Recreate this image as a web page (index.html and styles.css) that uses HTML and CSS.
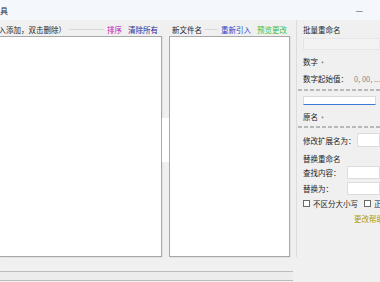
FILE: index.html
```html
<!DOCTYPE html>
<html lang="zh-CN">
  <head>
    <meta charset="UTF-8" />
    <title>重命名工具</title>
    <link rel="stylesheet" href="styles.css">
  </head>
  <body>
    <div class="titlebar">
      <span class="title">具</span>
      <span class="min-btn">—</span>
    </div>
    <div class="main">
      <div class="col-left">
        <div class="head">
          <span class="head-text cut">拖入添加，双击删除）</span>
          <span class="head-line"></span>
          <span class="link purple">排序</span>
          <span class="link navy">清除所有</span>
        </div>
        <div class="list"></div>
      </div>
      <div class="splitter">
        <div class="split-top"></div>
        <div class="split-mid"></div>
        <div class="split-bot"></div>
      </div>
      <div class="col-mid">
        <div class="head">
          <span class="head-text">新文件名</span>
          <span class="head-line"></span>
          <span class="link blue">重新引入</span>
          <span class="link green">预览更改</span>
        </div>
        <div class="list"></div>
      </div>
      <div class="col-right">
        <div class="rp-title">批量重命名</div>
        <div class="blank-input"></div>
        <div class="row">数字 <span class="plus">+</span></div>
        <div class="row row-start">
          <span class="label">数字起始值：</span>
          <span class="hint">0, 00, ...</span>
        </div>
        <div class="dash"></div>
        <div class="name-input"></div>
        <div class="row row-orig">原名 <span class="plus">+</span></div>
        <div class="dash dash-2"></div>
        <div class="row row-ext">
          <span class="label">修改扩展名为：</span>
          <span class="field"></span>
        </div>
        <div class="row row-group">替换重命名</div>
        <div class="row row-find">
          <span class="label">查找内容：</span>
          <span class="field"></span>
        </div>
        <div class="row row-repl">
          <span class="label">替换为：</span>
          <span class="field"></span>
        </div>
        <div class="row row-check">
          <span class="box"></span><span class="check-text">不区分大小写</span>
          <span class="box"></span><span class="check-text">正则</span>
        </div>
        <div class="row row-help"><span class="help">更改帮助</span></div>
      </div>
    </div>
    <div class="bottom">
      <div class="progress"></div>
    </div>
  </body>
</html>
```
FILE: styles.css
```css
body {
  margin: 0;
  width: 380px;
  height: 282px;
  overflow: hidden;
  background-color: #f0f0f0;
  color: #1e1e1e;
  font-family: "Noto Sans CJK SC", "Noto Sans", sans-serif;
  font-size: 7.5px;
}

.titlebar {
  height: 20px;
  background-color: #f4f7fb;
  display: flex;
  align-items: center;
  justify-content: space-between;
}

.title {
  font-size: 8px;
  padding-left: 0;
}

.min-btn {
  font-size: 8px;
  padding-right: 17px;
}

.main {
  display: flex;
  height: 237px;
}

.head {
  height: 16px;
  display: flex;
  align-items: center;
  padding-top: 2px;
  box-sizing: border-box;
  white-space: nowrap;
}

.head-text {
  padding-left: 3px;
}

.head-text.cut {
  margin-left: -12px;
}

.head-line {
  flex: 1;
  height: 1px;
  background-color: #d8d8d8;
  margin: 1px 3px 0 3px;
}

.link {
  margin-right: 6px;
}

.purple { color: #b620b6; }
.navy { color: #1f2a9a; }
.blue { color: #2244c8; }
.green { color: #3cbf3c; }

.list {
  height: 221px;
  background-color: #ffffff;
  border: 1px solid #a8a8a8;
  box-shadow: 1px 1px 0 #e2e2e2;
  box-sizing: border-box;
}

.col-left {
  width: 162px;
}

.col-left .list {
  border-left: none;
}

.col-left .link:last-child {
  margin-right: 4px;
}

.splitter {
  width: 7px;
  display: flex;
  flex-direction: column;
}

.split-top {
  height: 98px;
}

.split-mid {
  height: 44px;
  background-color: #ffffff;
}

.col-mid {
  width: 121px;
}

.col-mid .link:last-child {
  margin-right: 3px;
}

.col-right {
  flex: 1;
  margin-left: 6px;
  padding-left: 6px;
  border-left: 1px solid #dcdcdc;
  white-space: nowrap;
  overflow: hidden;
}

.rp-title {
  height: 16px;
  line-height: 16px;
  padding-top: 2px;
  box-sizing: border-box;
}

.blank-input {
  margin-top: 2px;
  height: 12px;
  background-color: #f3f3f3;
  border: 1px solid #e6e6e6;
  box-sizing: border-box;
}

.row {
  height: 14px;
  display: flex;
  align-items: center;
  margin-top: 4px;
}

.plus {
  font-size: 5px;
  margin-left: 3px;
}

.row-start {
  margin-top: 3px;
}

.row-start .label {
  width: 51px;
  flex-shrink: 0;
}

.hint {
  color: #8a8a8a;
}

.dash {
  margin-top: 4px;
  margin-left: -5px;
  height: 2px;
  background: repeating-linear-gradient(90deg, #b8b8b8 0 4px, transparent 4px 6px);
}

.dash-2 {
  margin-top: 3px;
}

.name-input {
  margin-top: 5px;
  width: 73px;
  height: 9px;
  background-color: #ffffff;
  border: 1px solid #dadada;
  border-bottom: 1px solid #3a7bd5;
  box-sizing: border-box;
}

.row-ext {
  margin-top: 5px;
}

.row-ext .label {
  width: 54px;
  flex-shrink: 0;
}

.field {
  flex: 1;
  height: 14px;
  background-color: #ffffff;
  border: 1px solid #dcdcdc;
  box-sizing: border-box;
}

.row-find {
  margin-top: 0;
}

.row-find .label,
.row-repl .label {
  width: 44px;
  flex-shrink: 0;
}

.row-find .field,
.row-repl .field {
  height: 13px;
}

.row-repl {
  margin-top: 2px;
}

.row-check {
  margin-top: 1px;
}

.box {
  flex-shrink: 0;
  width: 7px;
  height: 7px;
  border: 1px solid #6a6a6a;
  background-color: #ffffff;
  box-sizing: border-box;
  margin-right: 3px;
}

.check-text {
  flex-shrink: 0;
  margin-right: 6px;
}

.row-help {
  margin-top: 1px;
  padding-left: 51px;
}

.help {
  color: #b09a00;
}

.bottom {
  height: 25px;
  padding-top: 14px;
  box-sizing: border-box;
}

.progress {
  width: 293px;
  height: 10px;
  border-top: 1px solid #bdbdbd;
  border-bottom: 1px solid #bdbdbd;
  background-color: #ececec;
  box-sizing: border-box;
}
```
